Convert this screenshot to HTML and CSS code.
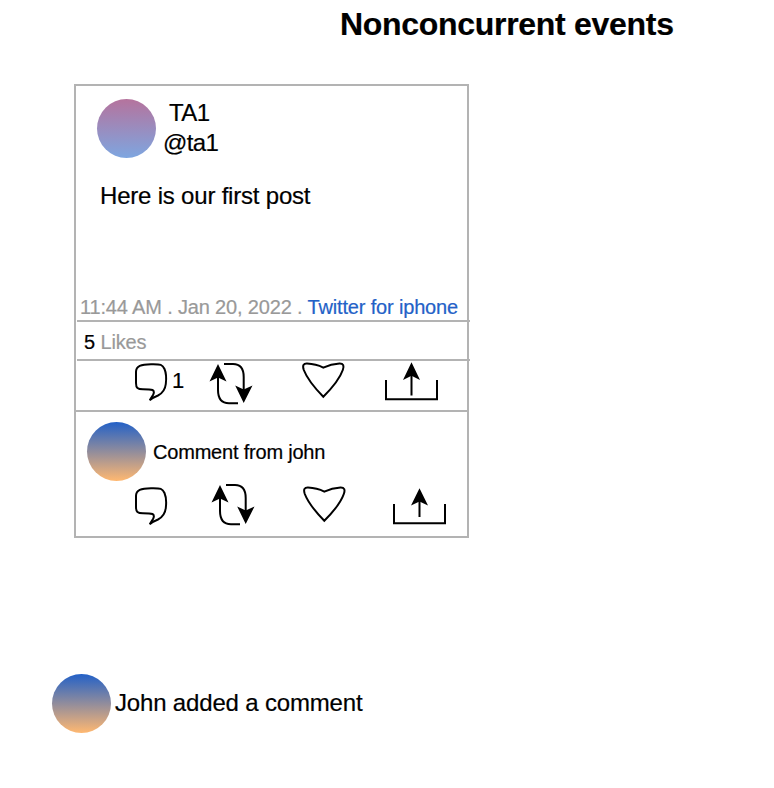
FILE: index.html
```
<!DOCTYPE html>
<html lang="en">
<head>
<meta charset="utf-8">
<title>Nonconcurrent events</title>
<link rel="stylesheet" href="styles.css">
</head>
<body>
<svg class="defs" aria-hidden="true">
  <symbol id="comment" viewBox="0 0 34 42"><path class="stroke" d="M2 10C2 4 7 2.3 17 2.2C27 2 28.5 2.5 30.5 7C32.2 11 32.4 17 31.8 22C31 29 28 31.5 24 33.5Q19 35.5 15.7 38.2L19 33C20 31 20.5 29 18.5 28Q16.5 27.3 9 27.3C3.5 27.3 2 26 2 21Z"/></symbol>
  <symbol id="repost" viewBox="0 0 46 46"><path class="stroke" d="M15 3H24Q34.7 3 34.7 16V32M9 15V29Q9 42.2 20 42.2H29"/><path d="M9 3L17.5 20.5L9 16.5L.5 20.5ZM34.7 42L26.2 24.5L34.7 28.5L43.5 24.5Z"/></symbol>
  <symbol id="heart" viewBox="0 0 46 40"><path class="stroke" d="M22.3 35.8Q7 20 2.8 9C1 3.5 3 2.5 6 2.6Q15 3 22.3 6.6Q30 3 38.5 2.5C42.5 2.4 43.3 5 41.8 9Q38 20 22.3 35.8Z"/></symbol>
</svg>
<main>
  <h1>Nonconcurrent events</h1>
  <article class="card">
    <header class="author">
      <span class="avatar avatar-ta"></span>
      <div class="names"><div class="name">TA1</div><div class="handle">@ta1</div></div>
    </header>
    <p class="post"><span>Here is our first post</span></p>
    <div class="meta"><span class="date">11:44 AM . Jan 20, 2022 .</span><span class="source">Twitter for iphone</span></div>
    <div class="likes"><b>5</b> <span>Likes</span></div>
    <div class="actions">
      <svg class="comment"><use href="#comment"/></svg>
      <span class="count">1</span>
      <svg class="repost"><use href="#repost"/></svg>
      <svg class="heart"><use href="#heart"/></svg>
      <svg class="share" viewBox="0 0 58 42"><path class="stroke" d="M2 19V38.3H53V19M27.5 13V34.5"/><path d="M27.5 1.2L36 19L27.5 14.8L19 19Z"/></svg>
    </div>
    <section class="reply">
      <div class="reply-head"><span class="avatar avatar-john"></span><span class="reply-text">Comment from john</span></div>
      <div class="actions reply-actions">
        <svg class="comment"><use href="#comment"/></svg>
        <svg class="repost"><use href="#repost"/></svg>
        <svg class="heart"><use href="#heart"/></svg>
        <svg class="share" viewBox="0 0 58 42"><path class="stroke" d="M2 19V38.3H53V19M27.5 15V32"/><path d="M27.5 3.2L36 20.5L27.5 16.5L19 20.5Z"/></svg>
      </div>
    </section>
  </article>
  <div class="notice"><span class="avatar avatar-john"></span><span class="notice-text">John added a comment</span></div>
</main>
</body>
</html>
```
FILE: styles.css
```
* { box-sizing: border-box; }
body {
  margin: 0;
  background: #fff;
  color: #000;
  font-family: "Liberation Sans", Arial, sans-serif;
  font-size: 24px;
  -webkit-text-stroke: 0.2px;
}
main { width: 774px; height: 788px; overflow: hidden; }
h1 {
  margin: 6px 0 42px 340px;
  font-size: 32px;
  line-height: 36px;
  letter-spacing: -0.3px;
  white-space: nowrap;
}
.defs { display: none; }
.stroke { fill: none; stroke: #000; stroke-width: 2; }
.card {
  width: 395px;
  height: 454px;
  margin-left: 74px;
  border: 2px solid #b3b3b3;
  white-space: nowrap;
}
.avatar { flex: none; width: 59px; height: 59px; border-radius: 50%; }
.avatar-ta { background: linear-gradient(#b5739d, #7ea6e0); }
.avatar-john { background: linear-gradient(#2361c7, #ffb871); }
.author { display: flex; height: 86px; padding: 13px 0 0 21px; }
.names { margin: -1px 0 0 7px; line-height: 30px; letter-spacing: -0.6px; }
.name { padding-left: 6px; }
.post { height: 123px; margin: 0; padding: 9px 0 0 24px; line-height: 30px; letter-spacing: -0.2px; }
.meta, .likes {
  width: 393px;
  margin-left: 1px;
  border-bottom: 2px solid #b3b3b3;
  color: #999;
  font-size: 20px;
}
.meta { display: flex; height: 27px; padding-left: 3px; line-height: 24px; letter-spacing: -0.16px; }
.source { margin-left: 5px; color: #2361c7; }
.likes { height: 39px; padding: 8px 0 0 7px; line-height: 24px; letter-spacing: -0.15px; }
.likes b { color: #000; font-weight: normal; }
.actions { display: flex; height: 49px; padding-left: 58px; }
.actions svg { flex: none; }
.comment { width: 34px; height: 42px; margin-top: 1px; }
.count { width: 15px; margin: 8px 0 0 4px; font-size: 22px; line-height: 24px; }
.repost { width: 46px; height: 46px; margin-left: 22px; }
.heart { width: 46px; height: 40px; margin-left: 46px; }
.share { width: 58px; height: 42px; margin-left: 37px; }
.reply { height: 126px; border-top: 2px solid #b3b3b3; }
.reply-head { display: flex; align-items: center; padding: 10px 0 0 11px; }
.reply-text { margin: 2px 0 0 7px; font-size: 20px; letter-spacing: -0.2px; }
.reply-actions { padding-top: 3px; }
.reply-actions .comment { margin-top: 2px; }
.reply-actions .repost { margin: -2px 0 0 43px; }
.reply-actions .heart { margin: 1px 0 0 45px; }
.reply-actions .share { margin: 1px 0 0 44px; }
.notice { display: flex; align-items: center; margin: 136px 0 0 52px; }
.notice-text { margin: -2px 0 0 4px; letter-spacing: -0.17px; }
```
